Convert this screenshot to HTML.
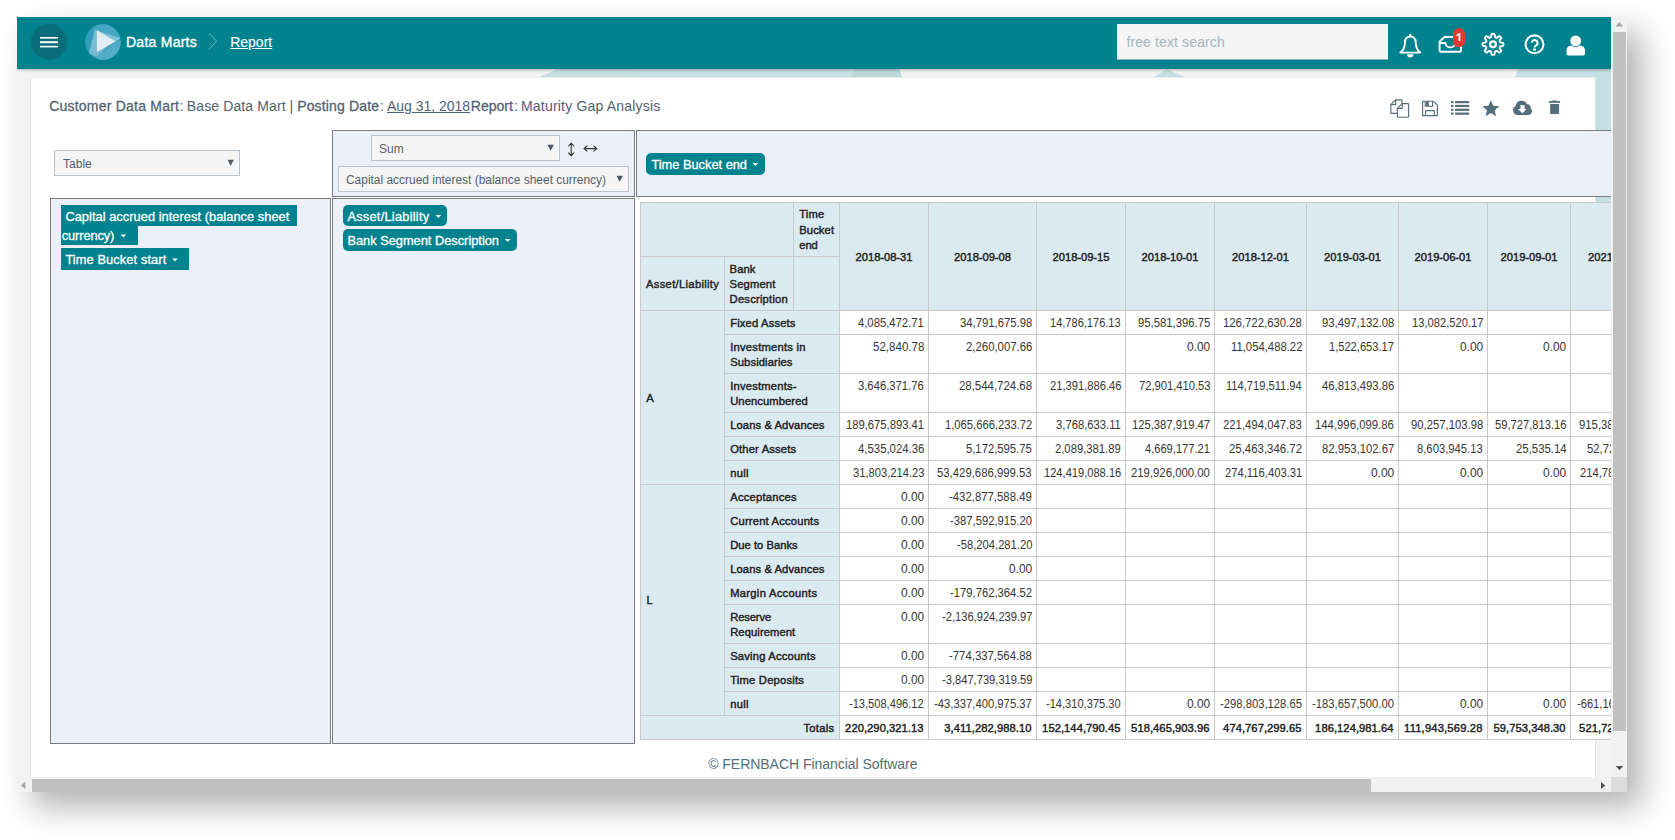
<!DOCTYPE html>
<html><head><meta charset="utf-8"><title>Report</title>
<style>
html,body{margin:0;padding:0;}
body{width:1675px;height:840px;background:#fff;overflow:hidden;position:relative;font-family:"Liberation Sans", sans-serif;}
.r{position:absolute;box-sizing:border-box;}
.t{position:absolute;white-space:pre;line-height:normal;font-family:"Liberation Sans", sans-serif;}
svg{position:absolute;overflow:visible;}
#frame{position:absolute;left:17px;top:17px;width:1610px;height:775px;overflow:hidden;background:#f3f3f3;}
#shadow{position:absolute;left:17px;top:17px;width:1610px;height:775px;background:#fff;box-shadow:15px 15px 30px rgba(0,0,0,0.30);}
#page{position:absolute;left:-17px;top:-17px;width:1675px;height:840px;}
#view{position:absolute;left:17px;top:17px;width:1594px;height:760px;overflow:hidden;}
#viewin{position:absolute;left:-17px;top:-17px;width:1675px;height:840px;}
</style></head><body>
<div id="shadow"></div>
<div id="frame"><div id="page">
<div id="view"><div id="viewin">
<div class="r" style="left:17px;top:17px;width:1594px;height:760px;background:#f3f3f3;"></div>
<svg style="left:0;top:0" width="1675" height="840"><g fill="#c4e0e4"><polygon points="537.6,78 558,69 899,69 902.5,78"/><polygon points="1152,78 1167,69 1186,78"/><polygon points="1515,78 1518,69 1611,69 1611,420 1596,440 1596,78"/></g><polygon points="537.6,78 558,69 633,69 633,78" fill="#c6dde0"/><polygon points="851,78 855,69 899,69 902.5,78" fill="#bcd6da"/></svg>
<div class="r" style="left:17px;top:17px;width:1594px;height:52px;background:#00838f;box-shadow:0 1px 3px rgba(0,0,0,0.28);"></div>
<svg style="left:0;top:0" width="1675" height="840"><circle cx="49" cy="41.7" r="18" fill="#0a6e7a"/><rect x="40" y="37" width="18" height="1.6" fill="#fff"/><rect x="40" y="41.2" width="18" height="2" fill="#fff"/><rect x="40" y="45.8" width="18" height="1.6" fill="#fff"/><defs><clipPath id="lc"><circle cx="102.9" cy="42.1" r="17.8"/></clipPath></defs><circle cx="102.9" cy="42.1" r="17.8" fill="#349dbc"/><g clip-path="url(#lc)"><polygon points="92.5,27 94.9,29.2 120.8,38.3 126,38 126,20 92,20" fill="#45a7c3"/><polygon points="116.5,41.6 122,40.6 126,66 97,66 96.8,56.6" fill="#52acc8"/><polygon points="94.9,29.2 96.8,30.2 96.8,57 89,53.2" fill="#78bdd3"/><polygon points="96.8,30.2 121,38.2 116,41.2" fill="#80c1d5"/><polygon points="96.8,52.3 108.5,45.6 96.8,57" fill="#72b9d0"/><polygon points="96.8,30.2 116,41.2 96.8,52.3" fill="#e2ecf2"/></g><polyline points="209,33.2 216.6,41.2 209,49.2" fill="none" stroke="#6fb8bf" stroke-width="1"/></svg>
<div class="t" style="left:126px;top:34.33px;font-size:14px;font-weight:400;color:#fff;letter-spacing:0.253px;-webkit-text-stroke:0.35px #fff;">Data Marts</div>
<div class="t" style="left:230.2px;top:34.33px;font-size:14px;font-weight:400;color:#fff;letter-spacing:-0.005px;text-decoration:underline;-webkit-text-stroke:0.10px #fff;">Report</div>
<div class="r" style="left:1117px;top:24px;width:271px;height:35.5px;background:#f5f5f5;border-bottom:1px solid #8db4ba;"></div>
<div class="t" style="left:1126.4px;top:33.93px;font-size:14px;font-weight:400;color:#a9b8c0;letter-spacing:0.125px;-webkit-text-stroke:0.10px #a9b8c0;">free text search</div>
<svg style="left:0;top:0" width="1675" height="840"><g fill="none" stroke="#fff" stroke-width="1.9" stroke-linejoin="round" stroke-linecap="round"><path d="M1400.4,52.6 C1404.2,49.4 1404.9,45.6 1404.9,42.4 C1404.9,38.6 1407.1,36.6 1410.3,36.6 C1413.5,36.6 1415.7,38.6 1415.7,42.4 C1415.7,45.6 1416.4,49.4 1420.2,52.6 Z"/><path d="M1439.6,41.6 L1444.4,37 H1456.4 L1461,41.6 V50.4 Q1461,51.7 1459.7,51.7 H1440.9 Q1439.6,51.7 1439.6,50.4 Z"/><path d="M1439.6,43 H1445.4 A4.9,4.4 0 0 0 1455.2,43 H1461"/><circle cx="1534.5" cy="44.3" r="8.95" stroke-width="2.1"/></g><circle cx="1410.3" cy="35" r="1.3" fill="#fff"/><path d="M1407.2,54.2 A3.1,3.3 0 0 0 1413.4,54.2 Z" fill="#fff"/><rect x="1453" y="28" width="12" height="19.2" rx="6" fill="#e53935"/><circle cx="1575.7" cy="40.9" r="5.4" fill="#fff"/><path d="M1566.5,53.6 V50.4 Q1566.5,45.6 1571.6,45.4 Q1575.7,48.4 1579.8,45.4 Q1585,45.6 1585,50.4 V53.6 Q1585,55.6 1583,55.6 H1568.5 Q1566.5,55.6 1566.5,53.6 Z" fill="#fff"/></svg>
<svg style="left:0;top:0" width="1675" height="840"><path d="M1460.3,33.3 V41 H1458.6 V35.4 L1456.5,36.2 V34.7 L1459.3,33.3 Z" fill="#fff"/></svg>
<svg style="left:0;top:0" width="1675" height="840"><path d="M1531.9,42.7 A2.85,2.85 0 1 1 1536.6,45.1 Q1534.6,46.3 1534.6,47.6" fill="none" stroke="#fff" stroke-width="2.1"/><rect x="1533.1" y="48.6" width="2.9" height="2" fill="#fff"/></svg>
<svg style="left:0;top:0" width="1675" height="840"><path d="M1491.10,36.85L1491.40,34.70C1491.40,33.55 1494.60,33.55 1494.60,34.70L1494.90,36.85Q1495.60,38.07 1496.96,37.70L1496.96,37.70L1498.69,36.40C1499.51,35.58 1501.77,37.84 1500.95,38.66L1499.65,40.39Q1499.28,41.75 1500.50,42.45L1500.50,42.45L1502.65,42.75C1503.80,42.75 1503.80,45.95 1502.65,45.95L1500.50,46.25Q1499.28,46.95 1499.65,48.31L1499.65,48.31L1500.95,50.04C1501.77,50.86 1499.51,53.12 1498.69,52.30L1496.96,51.00Q1495.60,50.63 1494.90,51.85L1494.90,51.85L1494.60,54.00C1494.60,55.15 1491.40,55.15 1491.40,54.00L1491.10,51.85Q1490.40,50.63 1489.04,51.00L1489.04,51.00L1487.31,52.30C1486.49,53.12 1484.23,50.86 1485.05,50.04L1486.35,48.31Q1486.72,46.95 1485.50,46.25L1485.50,46.25L1483.35,45.95C1482.20,45.95 1482.20,42.75 1483.35,42.75L1485.50,42.45Q1486.72,41.75 1486.35,40.39L1486.35,40.39L1485.05,38.66C1484.23,37.84 1486.49,35.58 1487.31,36.40L1489.04,37.70Q1490.40,38.07 1491.10,36.85Z" fill="none" stroke="#fff" stroke-width="2" stroke-linejoin="round"/><circle cx="1493" cy="44.35" r="2.95" fill="none" stroke="#fff" stroke-width="2.3"/></svg>
<div class="r" style="left:30px;top:77px;width:1566px;height:700px;background:#fff;border-left:1px solid #dfe2ea;border-right:1px solid #dfe2ea;border-top:1px solid #ededed;border-radius:3px 3px 0 0;"></div>
<div class="t" style="left:49.2px;top:98.33px;font-size:14px;font-weight:400;color:#516172;letter-spacing:0.220px;-webkit-text-stroke:0.28px #516172;">Customer Data Mart</div>
<div class="t" style="left:179.6px;top:98.33px;font-size:14px;font-weight:400;color:#516172;">:</div>
<div class="t" style="left:186.8px;top:98.33px;font-size:14px;font-weight:400;color:#516172;letter-spacing:0.124px;">Base Data Mart</div>
<div class="t" style="left:289.4px;top:98.33px;font-size:14px;font-weight:400;color:#516172;">|</div>
<div class="t" style="left:297.2px;top:98.33px;font-size:14px;font-weight:400;color:#516172;letter-spacing:0.152px;-webkit-text-stroke:0.28px #516172;">Posting Date</div>
<div class="t" style="left:380px;top:98.33px;font-size:14px;font-weight:400;color:#516172;">:</div>
<div class="t" style="left:387px;top:98.33px;font-size:14px;font-weight:400;color:#516172;letter-spacing:-0.025px;text-decoration:underline;">Aug 31, 2018</div>
<div class="t" style="left:470.8px;top:98.33px;font-size:14px;font-weight:400;color:#516172;letter-spacing:-0.005px;-webkit-text-stroke:0.28px #516172;">Report</div>
<div class="t" style="left:514px;top:98.33px;font-size:14px;font-weight:400;color:#516172;">:</div>
<div class="t" style="left:521px;top:98.33px;font-size:14px;font-weight:400;color:#516172;letter-spacing:0.196px;">Maturity Gap Analysis</div>
<svg style="left:0;top:0" width="1675" height="840"><g fill="#fff" stroke="#546e7a" stroke-width="1.15" stroke-linejoin="round"><path d="M1395.6,99.8 H1401.4 Q1402,99.8 1402,100.4 V112.8 Q1402,113.4 1401.4,113.4 H1391.4 Q1390.8,113.4 1390.8,112.8 V104.6 Z"/><path d="M1390.8,104.6 H1395.6 V99.8" fill="none"/><path d="M1402.2,103.6 H1408 Q1408.6,103.6 1408.6,104.2 V116.6 Q1408.6,117.2 1408,117.2 H1398 Q1397.4,117.2 1397.4,116.6 V108.4 Z"/><path d="M1397.4,108.4 H1402.2 V103.6" fill="none"/><path d="M1422.6,101.2 H1433.4 L1437.4,105.2 V115.6 H1422.6 Z"/><path d="M1425.2,101.2 V106.2 H1432.6 V101.2" fill="none"/><path d="M1425.6,115.6 V110.6 H1434.4 V115.6" fill="none"/></g><rect x="1426" y="101.4" width="2.8" height="4.6" fill="#546e7a"/><rect x="1451" y="101.0" width="2.4" height="2.2" fill="#546e7a"/><rect x="1455.1" y="101.0" width="14.1" height="2.2" fill="#546e7a"/><rect x="1451" y="104.85000000000001" width="2.4" height="2.2" fill="#546e7a"/><rect x="1455.1" y="104.85000000000001" width="14.1" height="2.2" fill="#546e7a"/><rect x="1451" y="108.7" width="2.4" height="2.2" fill="#546e7a"/><rect x="1455.1" y="108.7" width="14.1" height="2.2" fill="#546e7a"/><rect x="1451" y="112.55000000000001" width="2.4" height="2.2" fill="#546e7a"/><rect x="1455.1" y="112.55000000000001" width="14.1" height="2.2" fill="#546e7a"/><polygon fill="#546e7a" points="1490.85,100.20 1493.20,105.86 1499.31,106.35 1494.65,110.34 1496.08,116.30 1490.85,113.10 1485.62,116.30 1487.05,110.34 1482.39,106.35 1488.50,105.86"/><path fill="#546e7a" d="M1517.6,114.9 A4.7,4.7 0 0 1 1515.6,106 A6.1,6.1 0 0 1 1527.2,104.3 A3.3,3.3 0 0 1 1530.6,108.4 A3.6,3.6 0 0 1 1528.6,114.9 Z"/><path fill="#fff" d="M1520.4,105.3 H1524.6 V108.9 H1526.5 L1522.4,113.2 L1517.7,108.9 H1520.4 Z"/><rect x="1549" y="101.1" width="11.1" height="1.8" fill="#546e7a"/><rect x="1552.4" y="100.4" width="4.4" height="1.2" fill="#546e7a"/><path fill="#546e7a" d="M1550.1,104 H1559.1 V113 Q1559.1,114 1558.1,114 H1551.1 Q1550.1,114 1550.1,113 Z"/></svg>
<div class="r" style="left:54px;top:150px;width:186px;height:26px;background:#f5f5f5;border:1px solid #b9c4cc;"></div>
<div class="t" style="left:63.2px;top:156.89px;font-size:12.5px;font-weight:400;color:#55616b;transform:scaleX(0.9635);transform-origin:0 0;">Table</div>
<svg style="left:0;top:0" width="1675" height="840"><polygon points="227.5,159.7 233.89999999999998,159.7 230.7,165.7" fill="#4f5b66"/></svg>
<div class="r" style="left:50px;top:198px;width:281px;height:546px;background:#ebeff7;border:1px solid #7d7d7d;"></div>
<div class="r" style="left:332px;top:130px;width:303px;height:67px;background:#ebeff7;border:1px solid #7d7d7d;"></div>
<div class="r" style="left:636px;top:130px;width:1064px;height:67px;background:#ebeff7;border:1px solid #7d7d7d;"></div>
<div class="r" style="left:332px;top:198px;width:303px;height:546px;background:#ebeff7;border:1px solid #7d7d7d;"></div>
<div class="r" style="left:371px;top:135px;width:189px;height:26px;background:#f5f5f5;border:1px solid #b9c4cc;"></div>
<div class="t" style="left:378.6px;top:141.89px;font-size:12.5px;font-weight:400;color:#55616b;transform:scaleX(0.9571);transform-origin:0 0;">Sum</div>
<svg style="left:0;top:0" width="1675" height="840"><polygon points="547.5,144.7 553.9000000000001,144.7 550.7,150.7" fill="#4f5b66"/></svg>
<div class="r" style="left:338px;top:166px;width:291px;height:26px;background:#f5f5f5;border:1px solid #b9c4cc;"></div>
<div class="t" style="left:346.4px;top:172.89px;font-size:12.5px;font-weight:400;color:#55616b;transform:scaleX(0.9546);transform-origin:0 0;">Capital accrued interest (balance sheet currency)</div>
<svg style="left:0;top:0" width="1675" height="840"><polygon points="616.5,175.7 622.9000000000001,175.7 619.7,181.7" fill="#4f5b66"/></svg>
<svg style="left:0;top:0" width="1675" height="840"><g fill="none" stroke="#333" stroke-width="1.1" stroke-linecap="round" stroke-linejoin="round"><path d="M571.2,143.2 V155.6 M568.6,146 L571.2,143 L573.8,146 M568.6,152.8 L571.2,155.8 L573.8,152.8"/><path d="M584.2,148.6 H596.6 M587,146 L584,148.6 L587,151.2 M593.8,146 L596.8,148.6 L593.8,151.2"/></g></svg>
<div class="r" style="left:61px;top:205px;width:236px;height:21px;background:#00838f;"></div>
<div class="r" style="left:61px;top:225px;width:76.5px;height:20px;background:#00838f;"></div>
<div class="t" style="left:65.4px;top:209.22px;font-size:12.8px;font-weight:400;color:#fff;letter-spacing:0.052px;-webkit-text-stroke:0.32px #fff;">Capital accrued interest (balance sheet</div>
<div class="t" style="left:61.8px;top:228.02px;font-size:12.8px;font-weight:400;color:#fff;letter-spacing:-0.105px;-webkit-text-stroke:0.32px #fff;">currency)</div>
<svg style="left:0;top:0" width="1675" height="840"><polygon points="120.60000000000001,234.5 126.2,234.5 123.4,237.6" fill="#fff"/></svg>
<div class="r" style="left:61px;top:248px;width:128px;height:22px;background:#00838f;"></div>
<div class="t" style="left:65.4px;top:252.02px;font-size:12.8px;font-weight:400;color:#fff;letter-spacing:0.112px;-webkit-text-stroke:0.32px #fff;">Time Bucket start</div>
<svg style="left:0;top:0" width="1675" height="840"><polygon points="172.2,258.5 177.8,258.5 175,261.6" fill="#fff"/></svg>
<div class="r" style="left:343px;top:205px;width:104px;height:21px;background:#00838f;border-radius:5px;"></div>
<div class="t" style="left:347.4px;top:209.02px;font-size:12.8px;font-weight:400;color:#fff;letter-spacing:0.250px;-webkit-text-stroke:0.32px #fff;">Asset/Liability</div>
<svg style="left:0;top:0" width="1675" height="840"><polygon points="435.59999999999997,215.0 441.2,215.0 438.4,218.1" fill="#fff"/></svg>
<div class="r" style="left:343px;top:229px;width:174px;height:22px;background:#00838f;border-radius:5px;"></div>
<div class="t" style="left:347.4px;top:233.02px;font-size:12.8px;font-weight:400;color:#fff;letter-spacing:0.004px;-webkit-text-stroke:0.32px #fff;">Bank Segment Description</div>
<svg style="left:0;top:0" width="1675" height="840"><polygon points="504.8,239.0 510.40000000000003,239.0 507.6,242.1" fill="#fff"/></svg>
<div class="r" style="left:646px;top:153px;width:119px;height:22px;background:#00838f;border-radius:5px;"></div>
<div class="t" style="left:651.4px;top:157.02px;font-size:12.8px;font-weight:400;color:#fff;letter-spacing:0.004px;-webkit-text-stroke:0.32px #fff;">Time Bucket end</div>
<svg style="left:0;top:0" width="1675" height="840"><polygon points="752.6,163.0 758.1999999999999,163.0 755.4,166.1" fill="#fff"/></svg>
<div class="r" style="left:640px;top:202px;width:1023px;height:109px;background:#dbe9f0;"></div>
<div class="r" style="left:640px;top:310px;width:200px;height:430px;background:#dbe9f0;"></div>
<div class="r" style="left:840px;top:311px;width:823px;height:429px;background:#fff;"></div>
<div class="r" style="left:640px;top:202px;width:1023px;height:1px;background:#c9c9c9;"></div>
<div class="r" style="left:640px;top:202px;width:1px;height:538px;background:#c9c9c9;"></div>
<div class="r" style="left:640px;top:739px;width:1023px;height:1px;background:#c9c9c9;"></div>
<div class="r" style="left:640px;top:256px;width:199px;height:1px;background:#c9c9c9;"></div>
<div class="r" style="left:724px;top:256px;width:1px;height:459px;background:#c9c9c9;"></div>
<div class="r" style="left:793px;top:202px;width:1px;height:108px;background:#c9c9c9;"></div>
<div class="r" style="left:839px;top:202px;width:1px;height:538px;background:#c9c9c9;"></div>
<div class="r" style="left:640px;top:310px;width:1023px;height:1px;background:#c9c9c9;"></div>
<div class="r" style="left:928px;top:202px;width:1px;height:538px;background:#c9c9c9;"></div>
<div class="r" style="left:1036px;top:202px;width:1px;height:538px;background:#c9c9c9;"></div>
<div class="r" style="left:1125px;top:202px;width:1px;height:538px;background:#c9c9c9;"></div>
<div class="r" style="left:1214px;top:202px;width:1px;height:538px;background:#c9c9c9;"></div>
<div class="r" style="left:1306px;top:202px;width:1px;height:538px;background:#c9c9c9;"></div>
<div class="r" style="left:1398px;top:202px;width:1px;height:538px;background:#c9c9c9;"></div>
<div class="r" style="left:1487px;top:202px;width:1px;height:538px;background:#c9c9c9;"></div>
<div class="r" style="left:1570px;top:202px;width:1px;height:538px;background:#c9c9c9;"></div>
<div class="r" style="left:1662px;top:202px;width:1px;height:538px;background:#c9c9c9;"></div>
<div class="r" style="left:724px;top:334px;width:939px;height:1px;background:#c9c9c9;"></div>
<div class="r" style="left:724px;top:373px;width:939px;height:1px;background:#c9c9c9;"></div>
<div class="r" style="left:724px;top:412px;width:939px;height:1px;background:#c9c9c9;"></div>
<div class="r" style="left:724px;top:436px;width:939px;height:1px;background:#c9c9c9;"></div>
<div class="r" style="left:724px;top:460px;width:939px;height:1px;background:#c9c9c9;"></div>
<div class="r" style="left:640px;top:484px;width:1023px;height:1px;background:#c9c9c9;"></div>
<div class="r" style="left:724px;top:508px;width:939px;height:1px;background:#c9c9c9;"></div>
<div class="r" style="left:724px;top:532px;width:939px;height:1px;background:#c9c9c9;"></div>
<div class="r" style="left:724px;top:556px;width:939px;height:1px;background:#c9c9c9;"></div>
<div class="r" style="left:724px;top:580px;width:939px;height:1px;background:#c9c9c9;"></div>
<div class="r" style="left:724px;top:604px;width:939px;height:1px;background:#c9c9c9;"></div>
<div class="r" style="left:724px;top:643px;width:939px;height:1px;background:#c9c9c9;"></div>
<div class="r" style="left:724px;top:667px;width:939px;height:1px;background:#c9c9c9;"></div>
<div class="r" style="left:724px;top:691px;width:939px;height:1px;background:#c9c9c9;"></div>
<div class="r" style="left:640px;top:715px;width:1023px;height:1px;background:#c9c9c9;"></div>
<div class="r" style="left:640px;top:715px;width:1023px;height:1px;background:#c9c9c9;"></div>
<div class="t" style="left:855.6px;top:250.86px;font-size:11.2px;font-weight:400;color:#222;letter-spacing:-0.043px;-webkit-text-stroke:0.42px #222;">2018-08-31</div>
<div class="t" style="left:954.1px;top:250.86px;font-size:11.2px;font-weight:400;color:#222;letter-spacing:-0.043px;-webkit-text-stroke:0.42px #222;">2018-09-08</div>
<div class="t" style="left:1052.6px;top:250.86px;font-size:11.2px;font-weight:400;color:#222;letter-spacing:-0.043px;-webkit-text-stroke:0.42px #222;">2018-09-15</div>
<div class="t" style="left:1141.6px;top:250.86px;font-size:11.2px;font-weight:400;color:#222;letter-spacing:-0.043px;-webkit-text-stroke:0.42px #222;">2018-10-01</div>
<div class="t" style="left:1232.1px;top:250.86px;font-size:11.2px;font-weight:400;color:#222;letter-spacing:-0.043px;-webkit-text-stroke:0.42px #222;">2018-12-01</div>
<div class="t" style="left:1324.1px;top:250.86px;font-size:11.2px;font-weight:400;color:#222;letter-spacing:-0.043px;-webkit-text-stroke:0.42px #222;">2019-03-01</div>
<div class="t" style="left:1414.6px;top:250.86px;font-size:11.2px;font-weight:400;color:#222;letter-spacing:-0.043px;-webkit-text-stroke:0.42px #222;">2019-06-01</div>
<div class="t" style="left:1500.6px;top:250.86px;font-size:11.2px;font-weight:400;color:#222;letter-spacing:-0.043px;-webkit-text-stroke:0.42px #222;">2019-09-01</div>
<div class="t" style="left:1588.1px;top:250.86px;font-size:11.2px;font-weight:400;color:#222;letter-spacing:-0.043px;-webkit-text-stroke:0.42px #222;">2021-09-01</div>
<div class="t" style="left:799.2px;top:208.46px;font-size:11.2px;font-weight:400;color:#222;letter-spacing:0.237px;-webkit-text-stroke:0.42px #222;">Time</div>
<div class="t" style="left:799.2px;top:223.66px;font-size:11.2px;font-weight:400;color:#222;letter-spacing:0.133px;-webkit-text-stroke:0.42px #222;">Bucket</div>
<div class="t" style="left:799.2px;top:238.86px;font-size:11.2px;font-weight:400;color:#222;letter-spacing:-0.024px;-webkit-text-stroke:0.42px #222;">end</div>
<div class="t" style="left:646px;top:277.86px;font-size:11.2px;font-weight:400;color:#222;letter-spacing:0.320px;-webkit-text-stroke:0.42px #222;">Asset/Liability</div>
<div class="t" style="left:729.6px;top:262.86px;font-size:11.2px;font-weight:400;color:#222;letter-spacing:0.125px;-webkit-text-stroke:0.42px #222;">Bank</div>
<div class="t" style="left:729.6px;top:277.86px;font-size:11.2px;font-weight:400;color:#222;letter-spacing:0.146px;-webkit-text-stroke:0.42px #222;">Segment</div>
<div class="t" style="left:729.6px;top:292.86px;font-size:11.2px;font-weight:400;color:#222;letter-spacing:0.221px;-webkit-text-stroke:0.42px #222;">Description</div>
<div class="t" style="left:730.2px;top:316.86px;font-size:11.2px;font-weight:400;color:#222;letter-spacing:0.165px;-webkit-text-stroke:0.42px #222;">Fixed Assets</div>
<div class="t" style="left:858.46px;top:315.37px;font-size:12.85px;font-weight:400;color:#363636;transform:scaleX(0.8752);transform-origin:0 0;">4,085,472.71</div>
<div class="t" style="left:959.8799999999999px;top:315.37px;font-size:12.85px;font-weight:400;color:#363636;transform:scaleX(0.8792);transform-origin:0 0;">34,791,675.98</div>
<div class="t" style="left:1050.4399999999998px;top:315.37px;font-size:12.85px;font-weight:400;color:#363636;transform:scaleX(0.8602);transform-origin:0 0;">14,786,176.13</div>
<div class="t" style="left:1137.8799999999999px;top:315.37px;font-size:12.85px;font-weight:400;color:#363636;transform:scaleX(0.8792);transform-origin:0 0;">95,581,396.75</div>
<div class="t" style="left:1223.3px;top:315.37px;font-size:12.85px;font-weight:400;color:#363636;transform:scaleX(0.8826);transform-origin:0 0;">126,722,630.28</div>
<div class="t" style="left:1321.8799999999999px;top:315.37px;font-size:12.85px;font-weight:400;color:#363636;transform:scaleX(0.8792);transform-origin:0 0;">93,497,132.08</div>
<div class="t" style="left:1411.6599999999999px;top:315.37px;font-size:12.85px;font-weight:400;color:#363636;transform:scaleX(0.8697);transform-origin:0 0;">13,082,520.17</div>
<div class="t" style="left:730.2px;top:340.86px;font-size:11.2px;font-weight:400;color:#222;letter-spacing:0.240px;-webkit-text-stroke:0.42px #222;">Investments in</div>
<div class="t" style="left:730.2px;top:355.86px;font-size:11.2px;font-weight:400;color:#222;letter-spacing:0.121px;-webkit-text-stroke:0.42px #222;">Subsidiaries</div>
<div class="t" style="left:872.74px;top:339.37px;font-size:12.85px;font-weight:400;color:#363636;transform:scaleX(0.8988);transform-origin:0 0;">52,840.78</div>
<div class="t" style="left:965.68px;top:339.37px;font-size:12.85px;font-weight:400;color:#363636;transform:scaleX(0.8856);transform-origin:0 0;">2,260,007.66</div>
<div class="t" style="left:1186.9599999999998px;top:339.37px;font-size:12.85px;font-weight:400;color:#363636;transform:scaleX(0.9256);transform-origin:0 0;">0.00</div>
<div class="t" style="left:1230.6599999999999px;top:339.37px;font-size:12.85px;font-weight:400;color:#363636;transform:scaleX(0.8799);transform-origin:0 0;">11,054,488.22</div>
<div class="t" style="left:1329.24px;top:339.37px;font-size:12.85px;font-weight:400;color:#363636;transform:scaleX(0.8648);transform-origin:0 0;">1,522,653.17</div>
<div class="t" style="left:1459.9599999999998px;top:339.37px;font-size:12.85px;font-weight:400;color:#363636;transform:scaleX(0.9256);transform-origin:0 0;">0.00</div>
<div class="t" style="left:1542.9599999999998px;top:339.37px;font-size:12.85px;font-weight:400;color:#363636;transform:scaleX(0.9256);transform-origin:0 0;">0.00</div>
<div class="t" style="left:730.2px;top:379.86px;font-size:11.2px;font-weight:400;color:#222;letter-spacing:0.213px;-webkit-text-stroke:0.42px #222;">Investments-</div>
<div class="t" style="left:730.2px;top:394.86px;font-size:11.2px;font-weight:400;color:#222;letter-spacing:0.092px;-webkit-text-stroke:0.42px #222;">Unencumbered</div>
<div class="t" style="left:858.46px;top:378.37px;font-size:12.85px;font-weight:400;color:#363636;transform:scaleX(0.8752);transform-origin:0 0;">3,646,371.76</div>
<div class="t" style="left:959.0999999999999px;top:378.37px;font-size:12.85px;font-weight:400;color:#363636;transform:scaleX(0.8887);transform-origin:0 0;">28,544,724.68</div>
<div class="t" style="left:1049.6599999999999px;top:378.37px;font-size:12.85px;font-weight:400;color:#363636;transform:scaleX(0.8697);transform-origin:0 0;">21,391,886.46</div>
<div class="t" style="left:1138.6599999999999px;top:378.37px;font-size:12.85px;font-weight:400;color:#363636;transform:scaleX(0.8697);transform-origin:0 0;">72,901,410.53</div>
<div class="t" style="left:1226.4199999999998px;top:378.37px;font-size:12.85px;font-weight:400;color:#363636;transform:scaleX(0.8662);transform-origin:0 0;">114,719,511.94</div>
<div class="t" style="left:1321.8799999999999px;top:378.37px;font-size:12.85px;font-weight:400;color:#363636;transform:scaleX(0.8792);transform-origin:0 0;">46,813,493.86</div>
<div class="t" style="left:730.2px;top:418.86px;font-size:11.2px;font-weight:400;color:#222;letter-spacing:0.101px;-webkit-text-stroke:0.42px #222;">Loans &amp; Advances</div>
<div class="t" style="left:846.08px;top:417.37px;font-size:12.85px;font-weight:400;color:#363636;transform:scaleX(0.8739);transform-origin:0 0;">189,675,893.41</div>
<div class="t" style="left:944.8199999999999px;top:417.37px;font-size:12.85px;font-weight:400;color:#363636;transform:scaleX(0.8728);transform-origin:0 0;">1,065,666,233.72</div>
<div class="t" style="left:1056.24px;top:417.37px;font-size:12.85px;font-weight:400;color:#363636;transform:scaleX(0.8759);transform-origin:0 0;">3,768,633.11</div>
<div class="t" style="left:1132.08px;top:417.37px;font-size:12.85px;font-weight:400;color:#363636;transform:scaleX(0.8739);transform-origin:0 0;">125,387,919.47</div>
<div class="t" style="left:1223.3px;top:417.37px;font-size:12.85px;font-weight:400;color:#363636;transform:scaleX(0.8826);transform-origin:0 0;">221,494,047.83</div>
<div class="t" style="left:1315.3px;top:417.37px;font-size:12.85px;font-weight:400;color:#363636;transform:scaleX(0.8826);transform-origin:0 0;">144,996,099.86</div>
<div class="t" style="left:1410.8799999999999px;top:417.37px;font-size:12.85px;font-weight:400;color:#363636;transform:scaleX(0.8792);transform-origin:0 0;">90,257,103.98</div>
<div class="t" style="left:1494.6599999999999px;top:417.37px;font-size:12.85px;font-weight:400;color:#363636;transform:scaleX(0.8697);transform-origin:0 0;">59,727,813.16</div>
<div class="t" style="left:1579.3px;top:417.37px;font-size:12.85px;font-weight:400;color:#363636;transform:scaleX(0.8826);transform-origin:0 0;">915,384,207.55</div>
<div class="t" style="left:730.2px;top:442.86px;font-size:11.2px;font-weight:400;color:#222;letter-spacing:0.163px;-webkit-text-stroke:0.42px #222;">Other Assets</div>
<div class="t" style="left:857.6800000000001px;top:441.37px;font-size:12.85px;font-weight:400;color:#363636;transform:scaleX(0.8856);transform-origin:0 0;">4,535,024.36</div>
<div class="t" style="left:966.4599999999999px;top:441.37px;font-size:12.85px;font-weight:400;color:#363636;transform:scaleX(0.8752);transform-origin:0 0;">5,172,595.75</div>
<div class="t" style="left:1055.46px;top:441.37px;font-size:12.85px;font-weight:400;color:#363636;transform:scaleX(0.8752);transform-origin:0 0;">2,089,381.89</div>
<div class="t" style="left:1145.24px;top:441.37px;font-size:12.85px;font-weight:400;color:#363636;transform:scaleX(0.8648);transform-origin:0 0;">4,669,177.21</div>
<div class="t" style="left:1229.1px;top:441.37px;font-size:12.85px;font-weight:400;color:#363636;transform:scaleX(0.8887);transform-origin:0 0;">25,463,346.72</div>
<div class="t" style="left:1321.8799999999999px;top:441.37px;font-size:12.85px;font-weight:400;color:#363636;transform:scaleX(0.8792);transform-origin:0 0;">82,953,102.67</div>
<div class="t" style="left:1417.46px;top:441.37px;font-size:12.85px;font-weight:400;color:#363636;transform:scaleX(0.8752);transform-origin:0 0;">8,603,945.13</div>
<div class="t" style="left:1515.52px;top:441.37px;font-size:12.85px;font-weight:400;color:#363636;transform:scaleX(0.8852);transform-origin:0 0;">25,535.14</div>
<div class="t" style="left:1586.6599999999999px;top:441.37px;font-size:12.85px;font-weight:400;color:#363636;transform:scaleX(0.8799);transform-origin:0 0;">52,724,118.36</div>
<div class="t" style="left:730.2px;top:466.86px;font-size:11.2px;font-weight:400;color:#222;letter-spacing:0.270px;-webkit-text-stroke:0.42px #222;">null</div>
<div class="t" style="left:852.6600000000001px;top:465.37px;font-size:12.85px;font-weight:400;color:#363636;transform:scaleX(0.8697);transform-origin:0 0;">31,803,214.23</div>
<div class="t" style="left:937.4599999999999px;top:465.37px;font-size:12.85px;font-weight:400;color:#363636;transform:scaleX(0.8833);transform-origin:0 0;">53,429,686,999.53</div>
<div class="t" style="left:1043.86px;top:465.37px;font-size:12.85px;font-weight:400;color:#363636;transform:scaleX(0.8651);transform-origin:0 0;">124,419,088.16</div>
<div class="t" style="left:1131.3px;top:465.37px;font-size:12.85px;font-weight:400;color:#363636;transform:scaleX(0.8826);transform-origin:0 0;">219,926,000.00</div>
<div class="t" style="left:1224.86px;top:465.37px;font-size:12.85px;font-weight:400;color:#363636;transform:scaleX(0.8745);transform-origin:0 0;">274,116,403.31</div>
<div class="t" style="left:1370.9599999999998px;top:465.37px;font-size:12.85px;font-weight:400;color:#363636;transform:scaleX(0.9256);transform-origin:0 0;">0.00</div>
<div class="t" style="left:1459.9599999999998px;top:465.37px;font-size:12.85px;font-weight:400;color:#363636;transform:scaleX(0.9256);transform-origin:0 0;">0.00</div>
<div class="t" style="left:1542.9599999999998px;top:465.37px;font-size:12.85px;font-weight:400;color:#363636;transform:scaleX(0.9256);transform-origin:0 0;">0.00</div>
<div class="t" style="left:1580.08px;top:465.37px;font-size:12.85px;font-weight:400;color:#363636;transform:scaleX(0.8739);transform-origin:0 0;">214,783,905.12</div>
<div class="t" style="left:730.2px;top:490.86px;font-size:11.2px;font-weight:400;color:#222;letter-spacing:0.231px;-webkit-text-stroke:0.42px #222;">Acceptances</div>
<div class="t" style="left:900.96px;top:489.37px;font-size:12.85px;font-weight:400;color:#363636;transform:scaleX(0.9256);transform-origin:0 0;">0.00</div>
<div class="t" style="left:949.3199999999999px;top:489.37px;font-size:12.85px;font-weight:400;color:#363636;transform:scaleX(0.8848);transform-origin:0 0;">-432,877,588.49</div>
<div class="t" style="left:730.2px;top:514.86px;font-size:11.2px;font-weight:400;color:#222;letter-spacing:0.199px;-webkit-text-stroke:0.42px #222;">Current Accounts</div>
<div class="t" style="left:900.96px;top:513.37px;font-size:12.85px;font-weight:400;color:#363636;transform:scaleX(0.9256);transform-origin:0 0;">0.00</div>
<div class="t" style="left:950.0999999999999px;top:513.37px;font-size:12.85px;font-weight:400;color:#363636;transform:scaleX(0.8764);transform-origin:0 0;">-387,592,915.20</div>
<div class="t" style="left:730.2px;top:538.86px;font-size:11.2px;font-weight:400;color:#222;letter-spacing:0.027px;-webkit-text-stroke:0.42px #222;">Due to Banks</div>
<div class="t" style="left:900.96px;top:537.37px;font-size:12.85px;font-weight:400;color:#363636;transform:scaleX(0.9256);transform-origin:0 0;">0.00</div>
<div class="t" style="left:956.68px;top:537.37px;font-size:12.85px;font-weight:400;color:#363636;transform:scaleX(0.8727);transform-origin:0 0;">-58,204,281.20</div>
<div class="t" style="left:730.2px;top:562.86px;font-size:11.2px;font-weight:400;color:#222;letter-spacing:0.101px;-webkit-text-stroke:0.42px #222;">Loans &amp; Advances</div>
<div class="t" style="left:900.96px;top:561.37px;font-size:12.85px;font-weight:400;color:#363636;transform:scaleX(0.9256);transform-origin:0 0;">0.00</div>
<div class="t" style="left:1008.9599999999999px;top:561.37px;font-size:12.85px;font-weight:400;color:#363636;transform:scaleX(0.9256);transform-origin:0 0;">0.00</div>
<div class="t" style="left:730.2px;top:586.86px;font-size:11.2px;font-weight:400;color:#222;letter-spacing:0.299px;-webkit-text-stroke:0.42px #222;">Margin Accounts</div>
<div class="t" style="left:900.96px;top:585.37px;font-size:12.85px;font-weight:400;color:#363636;transform:scaleX(0.9256);transform-origin:0 0;">0.00</div>
<div class="t" style="left:950.0999999999999px;top:585.37px;font-size:12.85px;font-weight:400;color:#363636;transform:scaleX(0.8764);transform-origin:0 0;">-179,762,364.52</div>
<div class="t" style="left:730.2px;top:610.86px;font-size:11.2px;font-weight:400;color:#222;letter-spacing:-0.110px;-webkit-text-stroke:0.42px #222;">Reserve</div>
<div class="t" style="left:730.2px;top:625.86px;font-size:11.2px;font-weight:400;color:#222;letter-spacing:0.094px;-webkit-text-stroke:0.42px #222;">Requirement</div>
<div class="t" style="left:900.96px;top:609.37px;font-size:12.85px;font-weight:400;color:#363636;transform:scaleX(0.9256);transform-origin:0 0;">0.00</div>
<div class="t" style="left:941.6199999999999px;top:609.37px;font-size:12.85px;font-weight:400;color:#363636;transform:scaleX(0.8677);transform-origin:0 0;">-2,136,924,239.97</div>
<div class="t" style="left:730.2px;top:649.86px;font-size:11.2px;font-weight:400;color:#222;letter-spacing:0.199px;-webkit-text-stroke:0.42px #222;">Saving Accounts</div>
<div class="t" style="left:900.96px;top:648.37px;font-size:12.85px;font-weight:400;color:#363636;transform:scaleX(0.9256);transform-origin:0 0;">0.00</div>
<div class="t" style="left:949.3199999999999px;top:648.37px;font-size:12.85px;font-weight:400;color:#363636;transform:scaleX(0.8848);transform-origin:0 0;">-774,337,564.88</div>
<div class="t" style="left:730.2px;top:673.86px;font-size:11.2px;font-weight:400;color:#222;letter-spacing:0.224px;-webkit-text-stroke:0.42px #222;">Time Deposits</div>
<div class="t" style="left:900.96px;top:672.37px;font-size:12.85px;font-weight:400;color:#363636;transform:scaleX(0.9256);transform-origin:0 0;">0.00</div>
<div class="t" style="left:941.6199999999999px;top:672.37px;font-size:12.85px;font-weight:400;color:#363636;transform:scaleX(0.8677);transform-origin:0 0;">-3,847,739,319.59</div>
<div class="t" style="left:730.2px;top:697.86px;font-size:11.2px;font-weight:400;color:#222;letter-spacing:0.270px;-webkit-text-stroke:0.42px #222;">null</div>
<div class="t" style="left:849.46px;top:696.37px;font-size:12.85px;font-weight:400;color:#363636;transform:scaleX(0.8637);transform-origin:0 0;">-13,508,496.12</div>
<div class="t" style="left:934.2599999999999px;top:696.37px;font-size:12.85px;font-weight:400;color:#363636;transform:scaleX(0.8781);transform-origin:0 0;">-43,337,400,975.37</div>
<div class="t" style="left:1046.4599999999998px;top:696.37px;font-size:12.85px;font-weight:400;color:#363636;transform:scaleX(0.8637);transform-origin:0 0;">-14,310,375.30</div>
<div class="t" style="left:1186.9599999999998px;top:696.37px;font-size:12.85px;font-weight:400;color:#363636;transform:scaleX(0.9256);transform-origin:0 0;">0.00</div>
<div class="t" style="left:1220.1px;top:696.37px;font-size:12.85px;font-weight:400;color:#363636;transform:scaleX(0.8764);transform-origin:0 0;">-298,803,128.65</div>
<div class="t" style="left:1312.1px;top:696.37px;font-size:12.85px;font-weight:400;color:#363636;transform:scaleX(0.8764);transform-origin:0 0;">-183,657,500.00</div>
<div class="t" style="left:1459.9599999999998px;top:696.37px;font-size:12.85px;font-weight:400;color:#363636;transform:scaleX(0.9256);transform-origin:0 0;">0.00</div>
<div class="t" style="left:1542.9599999999998px;top:696.37px;font-size:12.85px;font-weight:400;color:#363636;transform:scaleX(0.9256);transform-origin:0 0;">0.00</div>
<div class="t" style="left:1576.8799999999999px;top:696.37px;font-size:12.85px;font-weight:400;color:#363636;transform:scaleX(0.8681);transform-origin:0 0;">-661,164,320.48</div>
<div class="t" style="left:646.2px;top:391.86px;font-size:11.2px;font-weight:400;color:#222;-webkit-text-stroke:0.42px #222;">A</div>
<div class="t" style="left:646.4px;top:593.86px;font-size:11.2px;font-weight:400;color:#222;-webkit-text-stroke:0.42px #222;">L</div>
<div class="t" style="left:803.4px;top:721.86px;font-size:11.2px;font-weight:400;color:#222;letter-spacing:0.294px;-webkit-text-stroke:0.42px #222;">Totals</div>
<div class="t" style="left:845.1194px;top:721.86px;font-size:11.2px;font-weight:400;color:#222;letter-spacing:0.050px;-webkit-text-stroke:0.42px #222;">220,290,321.13</div>
<div class="t" style="left:944.3149999999999px;top:721.86px;font-size:11.2px;font-weight:400;color:#222;letter-spacing:0.064px;-webkit-text-stroke:0.42px #222;">3,411,282,988.10</div>
<div class="t" style="left:1042.1193999999998px;top:721.86px;font-size:11.2px;font-weight:400;color:#222;letter-spacing:0.050px;-webkit-text-stroke:0.42px #222;">152,144,790.45</div>
<div class="t" style="left:1131.1193999999998px;top:721.86px;font-size:11.2px;font-weight:400;color:#222;letter-spacing:0.050px;-webkit-text-stroke:0.42px #222;">518,465,903.96</div>
<div class="t" style="left:1223.1193999999998px;top:721.86px;font-size:11.2px;font-weight:400;color:#222;letter-spacing:0.050px;-webkit-text-stroke:0.42px #222;">474,767,299.65</div>
<div class="t" style="left:1315.1193999999998px;top:721.86px;font-size:11.2px;font-weight:400;color:#222;letter-spacing:0.050px;-webkit-text-stroke:0.42px #222;">186,124,981.64</div>
<div class="t" style="left:1404.1193999999998px;top:721.86px;font-size:11.2px;font-weight:400;color:#222;letter-spacing:0.169px;-webkit-text-stroke:0.42px #222;">111,943,569.28</div>
<div class="t" style="left:1493.5456px;top:721.86px;font-size:11.2px;font-weight:400;color:#222;letter-spacing:0.039px;-webkit-text-stroke:0.42px #222;">59,753,348.30</div>
<div class="t" style="left:1579.1193999999998px;top:721.86px;font-size:11.2px;font-weight:400;color:#222;letter-spacing:0.050px;-webkit-text-stroke:0.42px #222;">521,728,810.53</div>
<div class="t" style="left:708.2px;top:756.33px;font-size:14px;font-weight:400;color:#546e7a;letter-spacing:-0.034px;">© FERNBACH Financial Software</div>
</div></div>
<div class="r" style="left:1611px;top:17px;width:16px;height:760px;background:#f1f1f1;"></div>
<div class="r" style="left:1613px;top:32px;width:13px;height:699px;background:#c1c1c1;"></div>
<div class="r" style="left:17px;top:777px;width:1594px;height:15px;background:#f1f1f1;"></div>
<div class="r" style="left:32px;top:779px;width:1339px;height:13px;background:#c1c1c1;"></div>
<div class="r" style="left:1611px;top:777px;width:16px;height:15px;background:#dcdcdc;"></div>
<svg style="left:0;top:0" width="1675" height="840"><polygon points="1615.6,26.4 1623,26.4 1619.3,21.9" fill="#a3a3a3"/><polygon points="1615.8,766 1623.2,766 1619.5,770.2" fill="#505050"/><polygon points="25.3,781.8 25.3,789 21,785.4" fill="#a3a3a3"/><polygon points="1601,782 1601,789 1605.2,785.5" fill="#505050"/></svg>
</div></div>
</body></html>
